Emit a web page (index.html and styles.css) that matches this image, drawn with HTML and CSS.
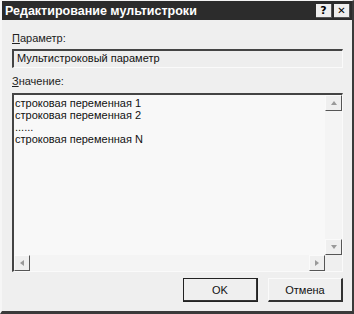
FILE: index.html
```html
<!DOCTYPE html>
<html lang="ru">
<head>
    <meta charset="UTF-8">
    <title>Редактирование мультистроки</title>
    <link rel="stylesheet" href="styles.css">
</head>
<body>
    <div class="dialog">
        <!-- Title bar -->
        <div class="titlebar">
            <span class="title">Редактирование мультистроки</span>
            <div class="title-buttons">
                <span class="tbtn">?</span>
                <span class="tbtn tbtn-close">✕</span>
            </div>
        </div>

        <div class="content">
            <div class="label"><u>П</u>араметр:</div>
            <div class="field">Мультистроковый параметр</div>

            <div class="label label-value"><u>З</u>начение:</div>
            <div class="memo">
                <div class="memo-main">
                    <div class="memo-text">строковая переменная 1
строковая переменная 2
......
строковая переменная N</div>
                    <div class="vscroll">
                        <span class="sbtn"><span class="arrow arrow-up"></span></span>
                        <span class="track"></span>
                        <span class="sbtn"><span class="arrow arrow-down"></span></span>
                    </div>
                </div>
                <div class="hscroll">
                    <span class="sbtn"><span class="arrow arrow-left"></span></span>
                    <span class="track"></span>
                    <span class="sbtn"><span class="arrow arrow-right"></span></span>
                    <span class="corner"></span>
                </div>
            </div>

            <div class="buttons">
                <button class="button button-default">OK</button>
                <button class="button">Отмена</button>
            </div>
        </div>
    </div>
</body>
</html>
```

FILE: styles.css
```css
body {
    margin: 0;
    background-color: #ffffff;
    font-family: "Liberation Sans", Arial, sans-serif;
    font-size: 11px;
    color: #111;
}
.dialog {
    box-sizing: border-box;
    width: 354px;
    height: 314px;
    display: flex;
    flex-direction: column;
    background-color: #efefef;
    border-top: 1px solid #f4f4f4;
    border-left: 2px solid #f6f6f6;
    border-right: 2px solid #3a3a3a;
    border-bottom: 3px solid #3a3a3a;
}
.titlebar {
    height: 19px;
    display: flex;
    align-items: center;
    justify-content: space-between;
    padding: 0 2px 0 3px;
    background-color: #2c2c2c;
}
.title {
    color: #ffffff;
    font-family: "Liberation Sans", Arial, sans-serif;
    font-weight: bold;
    font-size: 12.5px;
}
.title-buttons {
    display: flex;
    gap: 2px;
}
.tbtn {
    box-sizing: border-box;
    width: 16px;
    height: 14px;
    display: flex;
    align-items: center;
    justify-content: center;
    background-color: #eeeeee;
    border-right: 1px solid #555;
    border-bottom: 1px solid #555;
    font-family: "DejaVu Sans", sans-serif;
    font-weight: bold;
    font-size: 11px;
    color: #000;
}
.tbtn-close {
    font-size: 10px;
}
.content {
    flex: 1;
    display: flex;
    flex-direction: column;
    padding: 12px 9px 0 10px;
}
.label {
    height: 13px;
    line-height: 13px;
    margin-bottom: 4px;
    color: #222;
}
.label-value {
    margin-top: 7px;
}
.field {
    box-sizing: border-box;
    height: 19px;
    line-height: 15px;
    padding-left: 3px;
    background-color: #eeeeee;
    border-top: 2px solid #444;
    border-left: 2px solid #444;
    border-right: 1px solid #fafafa;
    border-bottom: 1px solid #fafafa;
}
.memo {
    box-sizing: border-box;
    height: 179px;
    margin-top: 1px;
    display: flex;
    flex-direction: column;
    background-color: #f8f8f8;
    border-top: 2px solid #444;
    border-left: 2px solid #444;
    border-right: 1px solid #fafafa;
    border-bottom: 1px solid #fafafa;
}
.memo-main {
    flex: 1;
    display: flex;
}
.memo-text {
    flex: 1;
    padding: 2px 0 0 1px;
    line-height: 12px;
    white-space: pre;
    color: #111;
}
.vscroll {
    width: 17px;
    display: flex;
    flex-direction: column;
    background-color: #f4f4f4;
}
.hscroll {
    height: 16px;
    display: flex;
    background-color: #f4f4f4;
}
.track {
    flex: 1;
}
.sbtn {
    box-sizing: border-box;
    width: 17px;
    height: 16px;
    display: flex;
    align-items: center;
    justify-content: center;
    background-color: #efefef;
    border-top: 1px solid #fafafa;
    border-left: 1px solid #fafafa;
    border-right: 1px solid #555;
    border-bottom: 1px solid #555;
}
.hscroll .sbtn {
    width: 16px;
}
.corner {
    width: 17px;
    background-color: #efefef;
}
.arrow {
    width: 0;
    height: 0;
    border: 3px solid transparent;
}
.arrow-up {
    border-bottom: 4px solid #999;
    border-top-width: 0;
}
.arrow-down {
    border-top: 4px solid #999;
    border-bottom-width: 0;
}
.arrow-left {
    border-right: 4px solid #999;
    border-left-width: 0;
}
.arrow-right {
    border-left: 4px solid #999;
    border-right-width: 0;
}
.buttons {
    display: flex;
    justify-content: flex-end;
    gap: 10px;
    margin-top: 6px;
}
.button {
    box-sizing: border-box;
    width: 75px;
    height: 24px;
    padding: 0;
    font-family: "Liberation Sans", Arial, sans-serif;
    font-size: 11px;
    color: #111;
    background-color: #efefef;
    border-top: 1px solid #fafafa;
    border-left: 1px solid #fafafa;
    border-right: 2px solid #333;
    border-bottom: 2px solid #333;
    border-radius: 0;
}
.button-default {
    outline: 1px solid #222;
    outline-offset: -1px;
}
```
